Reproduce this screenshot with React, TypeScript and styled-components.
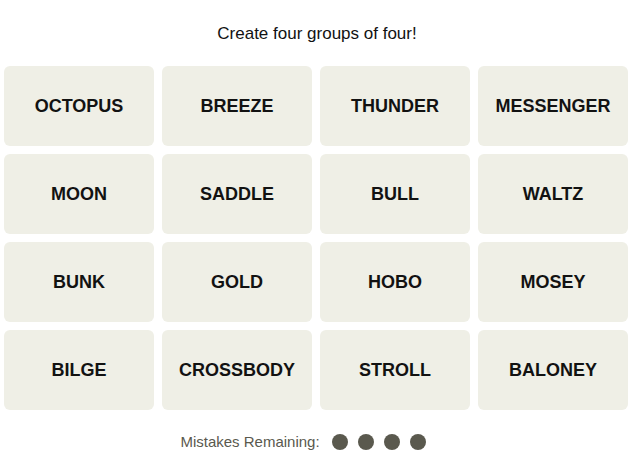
import styled, { createGlobalStyle } from "styled-components";

const GlobalStyle = createGlobalStyle`
  body {
    margin: 0;
    background: #ffffff;
    font-family: "Liberation Sans", Arial, sans-serif;
    color: #121212;
  }
`;

const Page = styled.div`
  width: 634px;
  display: flex;
  flex-direction: column;
`;

const Title = styled.p`
  margin: 0;
  padding-top: 24px;
  height: 20px;
  line-height: 20px;
  text-align: center;
  font-size: 17px;
`;

const Board = styled.div`
  margin: 22px 0 0 4px;
  display: grid;
  grid-template-columns: repeat(4, 150px);
  grid-auto-rows: 80px;
  gap: 8px;
`;

const Tile = styled.button`
  border: none;
  border-radius: 6px;
  background: #efefe6;
  color: #121212;
  font-family: "Liberation Sans", Arial, sans-serif;
  font-weight: 700;
  font-size: 18px;
  text-transform: uppercase;
  display: flex;
  align-items: center;
  justify-content: center;
  padding: 0;
  cursor: pointer;
`;

const Mistakes = styled.div`
  margin-top: 23px;
  padding-right: 28px;
  display: flex;
  align-items: center;
  justify-content: center;
  gap: 12px;
  color: #5a594e;
  font-size: 15px;
`;

const Dots = styled.div`
  display: flex;
  gap: 10px;
`;

const Dot = styled.span`
  width: 16px;
  height: 16px;
  border-radius: 50%;
  background: #5a594e;
`;

const words = [
  "OCTOPUS", "BREEZE", "THUNDER", "MESSENGER",
  "MOON", "SADDLE", "BULL", "WALTZ",
  "BUNK", "GOLD", "HOBO", "MOSEY",
  "BILGE", "CROSSBODY", "STROLL", "BALONEY",
];

export default function App() {
  return (
    <Page>
      <GlobalStyle />
      <Title>Create four groups of four!</Title>
      <Board>
        {words.map((w) => (
          <Tile key={w}>{w}</Tile>
        ))}
      </Board>
      <Mistakes>
        <span>Mistakes Remaining:</span>
        <Dots>
          {[0, 1, 2, 3].map((i) => (
            <Dot key={i} />
          ))}
        </Dots>
      </Mistakes>
    </Page>
  );
}
